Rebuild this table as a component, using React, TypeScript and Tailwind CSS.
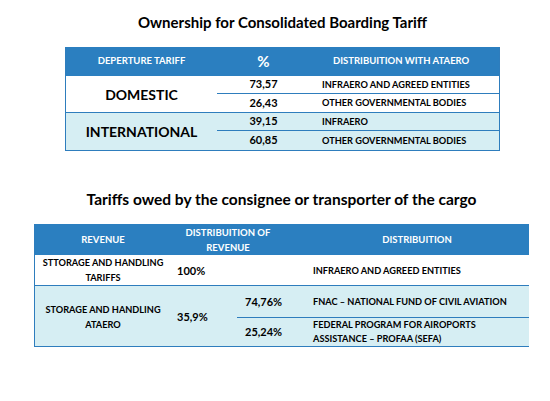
const blue = 'bg-[#2b7fc0]'

function BoardingTable() {
  return (
    <div className="ml-[65px] w-[435px]">
      <h2 className="h-[47px] pt-[12px] text-center text-[15px] leading-[20px] font-bold text-black">
        Ownership for Consolidated Boarding Tariff
      </h2>
      <div className="border-x border-b border-[#2e7dbd]">
        {/* header */}
        <div className={`flex h-[29px] items-center text-white font-bold ${blue}`}>
          <div className="w-[151px] text-center text-[9.5px]">DEPERTURE TARIFF</div>
          <div className="w-[93px] text-center text-[15px]">%</div>
          <div className="flex-1 pl-[23px] text-[9.5px]">DISTRIBUITION WITH ATAERO</div>
        </div>

        {/* domestic */}
        <div className="flex h-[37px] border-b border-[#2e7dbd] bg-white">
          <div className="flex w-[151px] items-center justify-center text-[14px] font-bold">DOMESTIC</div>
          <div className="flex flex-1 flex-col">
            <div className="flex h-[18px] items-center border-b border-[#2e7dbd]">
              <div className="w-[93px] text-center text-[11px] font-bold">73,57</div>
              <div className="pl-[12px] text-[9.2px] font-bold">INFRAERO AND AGREED ENTITIES</div>
            </div>
            <div className="flex flex-1 items-center">
              <div className="w-[93px] text-center text-[11px] font-bold">26,43</div>
              <div className="pl-[12px] text-[9.2px] font-bold">OTHER GOVERNMENTAL BODIES</div>
            </div>
          </div>
        </div>

        {/* international */}
        <div className="flex h-[37px] bg-[#d6eef3]">
          <div className="flex w-[151px] items-center justify-center text-[14px] font-bold">INTERNATIONAL</div>
          <div className="flex flex-1 flex-col">
            <div className="flex h-[18px] items-center border-b border-[#2e7dbd]">
              <div className="w-[93px] text-center text-[11px] font-bold">39,15</div>
              <div className="pl-[12px] text-[9.2px] font-bold">INFRAERO</div>
            </div>
            <div className="flex flex-1 items-center">
              <div className="w-[93px] text-center text-[11px] font-bold">60,85</div>
              <div className="pl-[12px] text-[9.2px] font-bold">OTHER GOVERNMENTAL BODIES</div>
            </div>
          </div>
        </div>
      </div>
    </div>
  )
}

function CargoTable() {
  return (
    <div className="ml-[34px] mt-[36px] w-[495px]">
      <h2 className="h-[37px] pt-[2px] text-center text-[15.5px] leading-[20px] font-bold text-black">
        Tariffs owed by the consignee or transporter of the cargo
      </h2>
      <div className="border-l border-b border-[#2e7dbd]">
        {/* header */}
        <div className={`flex h-[31px] items-center text-[9.5px] leading-[15px] font-bold text-white ${blue}`}>
          <div className="w-[136px] text-center">REVENUE</div>
          <div className="w-[114px] text-center">
            DISTRIBUITION OF
            <br />
            REVENUE
          </div>
          <div className="flex-1 pl-[20px] text-center">DISTRIBUITION</div>
        </div>

        {/* storage tariffs */}
        <div className="flex h-[31px] items-center border-b border-[#2e7dbd] bg-white text-[9.2px] leading-[15px] font-bold">
          <div className="w-[136px] text-center">
            STTORAGE AND HANDLING
            <br />
            TARIFFS
          </div>
          <div className="w-[142px] pl-[6px] text-[11px]">100%</div>
          <div>INFRAERO AND AGREED ENTITIES</div>
        </div>

        {/* storage ataero */}
        <div className="flex h-[60px] bg-[#d6eef3] text-[9.2px] leading-[14px] font-bold">
          <div className="flex w-[136px] items-center justify-center pt-[2px] text-center leading-[15px]">
            STORAGE AND HANDLING
            <br />
            ATAERO
          </div>
          <div className="flex w-[66px] items-center pl-[6px] pt-[2px] text-[11px]">35,9%</div>
          <div className="flex flex-1 flex-col">
            <div className="flex h-[32px] items-center border-b border-[#2e7dbd]">
              <div className="w-[76px] pl-[8px] text-[11px]">74,76%</div>
              <div>FNAC – NATIONAL FUND OF CIVIL AVIATION</div>
            </div>
            <div className="flex flex-1 items-center">
              <div className="w-[76px] pl-[8px] text-[11px]">25,24%</div>
              <div>
                FEDERAL PROGRAM FOR AIROPORTS
                <br />
                ASSISTANCE – PROFAA (SEFA)
              </div>
            </div>
          </div>
        </div>
      </div>
    </div>
  )
}

export default function App() {
  return (
    <div className="h-[401px] w-[550px] overflow-hidden bg-white font-['Lato',sans-serif] text-black">
      <BoardingTable />
      <CargoTable />
    </div>
  )
}
